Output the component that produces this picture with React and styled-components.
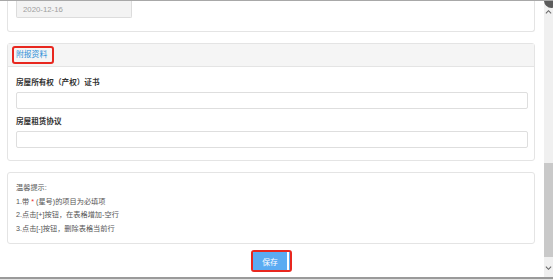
import React from "react";
import styled, { createGlobalStyle } from "styled-components";

const GlobalStyle = createGlobalStyle`
  html, body {
    margin: 0;
    padding: 0;
    background: #fff;
  }
  body {
    font-family: "Liberation Sans", "Noto Sans CJK SC", sans-serif;
    color: #333;
  }
  * {
    box-sizing: border-box;
  }
`;

export default function App() {
  return (
    <>
      <GlobalStyle />
      <Frame>
        <Page>
          <Panel $cut>
            <DateInput value="2020-12-16" readOnly />
          </Panel>

          <Panel>
            <PanelHeader>
              <Marked>
                <HeaderTitle>附报资料</HeaderTitle>
              </Marked>
            </PanelHeader>
            <PanelBody>
              <Field>
                <Label>房屋所有权（产权）证书</Label>
                <TextInput />
              </Field>
              <Field>
                <Label>房屋租赁协议</Label>
                <TextInput />
              </Field>
            </PanelBody>
          </Panel>

          <Panel>
            <Tips>
              <p>温馨提示:</p>
              <p>
                1.带 <Star>*</Star> (星号)的项目为必填项
              </p>
              <p>2.点击[+]按钮，在表格增加-空行</p>
              <p>3.点击[-]按钮，删除表格当前行</p>
            </Tips>
          </Panel>

          <Actions>
            <Marked $button>
              <SaveButton>保存</SaveButton>
            </Marked>
          </Actions>
        </Page>

        <Scrollbar>
          <Arrow viewBox="0 0 8 6">
            <path d="M1 4.5 L4 1.5 L7 4.5" />
          </Arrow>
          <Track>
            <Thumb />
          </Track>
          <Arrow viewBox="0 0 8 6">
            <path d="M1 1.5 L4 4.5 L7 1.5" />
          </Arrow>
        </Scrollbar>

        <CloseDot />
      </Frame>
      <BottomEdge />
    </>
  );
}

const Frame = styled.div`
  position: relative;
  display: flex;
  width: 553px;
  height: 277px;
  overflow: hidden;
  border-top: 1px solid #a8a8a8;
`;

const Page = styled.div`
  flex: 1;
  display: flex;
  flex-direction: column;
  gap: 11px;
  padding: 0 9px 0 7px;
`;

const Panel = styled.div`
  border: 1px solid #e4e4e4;
  border-top: ${(p) => (p.$cut ? "none" : "1px solid #e4e4e4")};
  border-radius: ${(p) => (p.$cut ? "0 0 3px 3px" : "3px")};
  padding: ${(p) => (p.$cut ? "0 8px 13px" : "0")};
  background: #fff;
`;

const DateInput = styled.input`
  display: block;
  width: 116px;
  height: 17px;
  padding: 0 6px;
  border: 1px solid #dcdcdc;
  border-top: none;
  border-radius: 0 0 2px 2px;
  background: #f3f3f3;
  color: #a0a0a0;
  font: 7.8px "Liberation Sans", sans-serif;
  outline: none;
`;

const PanelHeader = styled.div`
  display: flex;
  height: 23px;
  padding: 2px 0 0 4px;
  background: #f5f5f5;
  border-bottom: 1px solid #e4e4e4;
`;

const Marked = styled.div`
  display: flex;
  border: 2px solid #e8271f;
  border-radius: 3px;
  padding: ${(p) => (p.$button ? "0" : "0 5px 0 2px")};
  height: ${(p) => (p.$button ? "22px" : "18px")};
  align-items: center;
`;

const HeaderTitle = styled.span`
  font-size: 7.8px;
  line-height: 14px;
  color: #2a8fd8;
`;

const PanelBody = styled.div`
  display: flex;
  flex-direction: column;
  gap: 7px;
  padding: 10px 6px 12px 8px;
`;

const Field = styled.div`
  display: flex;
  flex-direction: column;
  gap: 3px;
`;

const Label = styled.label`
  font-size: 7.6px;
  line-height: 12px;
  font-weight: bold;
  color: #333;
`;

const TextInput = styled.input`
  display: block;
  width: 100%;
  height: 17px;
  border: 1px solid #dedede;
  border-radius: 2px;
  background: #fff;
  outline: none;
`;

const Tips = styled.div`
  padding: 8px 8px;
  font-size: 7.2px;
  line-height: 13.5px;
  color: #555;
  p {
    margin: 0;
  }
`;

const Star = styled.span`
  color: #e8271f;
`;

const Actions = styled.div`
  display: flex;
  justify-content: center;
  margin-top: -5px;
`;

const SaveButton = styled.button`
  width: 37px;
  height: 18px;
  padding: 0 2px 0 0;
  border: none;
  background: #5babf2;
  box-shadow: inset -1px 0 0 #5babf2, inset -3px 0 0 #fff;
  color: #fff;
  font: 7.8px "Liberation Sans", "Noto Sans CJK SC", sans-serif;
  cursor: pointer;
`;

const Scrollbar = styled.div`
  display: flex;
  flex-direction: column;
  align-items: center;
  width: 9px;
  background: #f0f0f0;
  padding: 8px 0 6px;
`;

const Arrow = styled.svg`
  width: 7px;
  height: 6px;
  fill: none;
  stroke: #666;
  stroke-width: 1.2;
`;

const Track = styled.div`
  flex: 1;
  width: 100%;
  display: flex;
  flex-direction: column;
  justify-content: flex-end;
  padding-bottom: 8px;
`;

const Thumb = styled.div`
  width: 100%;
  height: 94px;
  background: #c9c9c9;
`;

const CloseDot = styled.div`
  position: absolute;
  top: -8px;
  right: -6px;
  width: 15px;
  height: 15px;
  border-radius: 50%;
  background: #5c5c5c;
`;

const BottomEdge = styled.div`
  width: 553px;
  height: 3px;
  border-top: 2px solid #9a9a9a;
  background: #e2e2e2;
`;
